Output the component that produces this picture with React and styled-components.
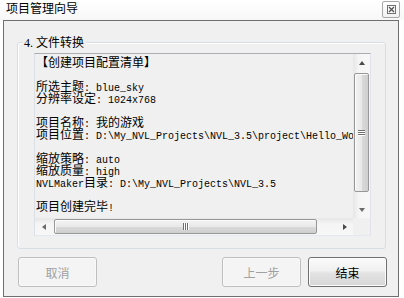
import React from 'react'
import styled, { createGlobalStyle } from 'styled-components'

const GlobalStyle = createGlobalStyle`
  body { margin: 0; background: #fff; }
`

const lines = [
  '【创建项目配置清单】',
  '',
  '所选主题: blue_sky',
  '分辨率设定: 1024x768',
  '',
  '项目名称: 我的游戏',
  '项目位置: D:\\My_NVL_Projects\\NVL_3.5\\project\\Hello_World',
  '',
  '缩放策略: auto',
  '缩放质量: high',
  'NVLMaker目录: D:\\My_NVL_Projects\\NVL_3.5',
  '',
  '项目创建完毕!',
]

// split a line into ascii / cjk runs, the ascii part uses the narrow mono font
function runs(text) {
  return text.match(/[\x00-\x7f]+|[^\x00-\x7f]+/g) || []
}

function App() {
  return (
    <>
      <GlobalStyle />
      <Window>
        <TitleBar>
          <Title>项目管理向导</Title>
          <CloseBtn>
            <svg width="9" height="9" viewBox="0 0 9 9">
              <rect x="0.5" y="0.5" width="8" height="8" fill="none" stroke="#707070" />
              <path d="M2 2 L7 7 M7 2 L2 7" stroke="#505050" strokeWidth="1.2" />
            </svg>
          </CloseBtn>
        </TitleBar>
        <Panel>
          <Group>
            <Legend><Num>4. </Num>文件转换</Legend>
            <TextBox>
              <Content>
                {lines.map((l, i) => (
                  <Line key={i}>
                    {runs(l).map((r, j) =>
                      /^[\x00-\x7f]+$/.test(r) ? <Latin key={j}>{r}</Latin> : <span key={j}>{r}</span>
                    )}
                  </Line>
                ))}
              </Content>
              <VScroll>
                <ArrowBox vertical><Arrow dir="up" /></ArrowBox>
                <VTrack>
                  <Thumb vertical>
                    <Grip vertical><i /><i /><i /></Grip>
                  </Thumb>
                </VTrack>
                <ArrowBox vertical><Arrow dir="down" /></ArrowBox>
              </VScroll>
              <HScroll>
                <ArrowBox><Arrow dir="left" /></ArrowBox>
                <HTrack>
                  <Thumb>
                    <Grip><i /><i /><i /></Grip>
                  </Thumb>
                </HTrack>
                <ArrowBox><Arrow dir="right" /></ArrowBox>
              </HScroll>
              <Corner />
            </TextBox>
          </Group>
          <ButtonRow>
            <Button disabled>取消</Button>
            <Spacer />
            <Button disabled>上一步</Button>
            <Button>结束</Button>
          </ButtonRow>
        </Panel>
      </Window>
    </>
  )
}

const Window = styled.div`
  width: 404px;
  height: 298px;
  display: flex;
  flex-direction: column;
  background: #fff;
  font-family: "Noto Sans CJK SC", "Liberation Sans", sans-serif;
  font-size: 12px;
  color: #000;
  overflow: hidden;
`

const TitleBar = styled.div`
  height: 20px;
  box-sizing: border-box;
  display: flex;
  justify-content: space-between;
  align-items: flex-start;
  padding: 1px 4px 0 6px;
  background: linear-gradient(#ffffff, #f7f7f7);
`

const Title = styled.div`
  line-height: 13px;
  font-size: 12px;
`

const CloseBtn = styled.div`
  width: 18px;
  height: 17px;
  box-sizing: border-box;
  border: 1px solid #a9a9a9;
  border-radius: 2px;
  background: linear-gradient(#ffffff, #f1f1f1);
  display: flex;
  align-items: center;
  justify-content: center;
`

const Panel = styled.div`
  flex: 1;
  min-height: 0;
  margin: 0 5px 1px 3px;
  border: 1px solid #6f6f6f;
  background: #f0f0f0;
  display: flex;
  flex-direction: column;
`

const Group = styled.div`
  position: relative;
  margin: 21px 12px 0 13px;
  padding: 10px 14px 12px 16px;
  border: 1px solid #d5dfe5;
  border-radius: 3px;
  box-shadow: inset 1px 1px 0 #fff;
`

const Legend = styled.div`
  position: absolute;
  top: -8px;
  left: 4px;
  padding: 0 2px;
  line-height: 14px;
  background: #f0f0f0;
  white-space: nowrap;
`

const Num = styled.span`
  font-family: "Liberation Serif", serif;
  font-size: 12px;
`

const TextBox = styled.div`
  height: 183px;
  box-sizing: border-box;
  display: grid;
  grid-template-columns: minmax(0, 1fr) 17px;
  grid-template-rows: minmax(0, 1fr) 17px;
  border: 1px solid;
  border-color: #abadb3 #e2e3ea #e3e9ef #dbdfe6;
  background: #f0f0f0;
`

const Content = styled.div`
  overflow: hidden;
  padding: 2px 0 0 1px;
`

const Line = styled.div`
  height: 12px;
  line-height: 12px;
  white-space: pre;
  font-size: 12px;
`

const Latin = styled.span`
  font-family: "Liberation Mono", monospace;
  font-size: 10px;
`

const VScroll = styled.div`
  display: flex;
  flex-direction: column;
  background: linear-gradient(to right, #e6e6e6, #f5f5f5 35%, #f7f7f7);
`

const HScroll = styled.div`
  display: flex;
  background: linear-gradient(#e6e6e6, #f5f5f5 35%, #f7f7f7);
`

const Corner = styled.div`
  background: #f0f0f0;
`

const ArrowBox = styled.div`
  flex: none;
  width: 17px;
  height: 17px;
  display: flex;
  align-items: center;
  justify-content: center;
`

const arrowBorders = {
  up: 'border-width: 0 3.5px 4px; border-color: transparent transparent #4a4a4a;',
  down: 'border-width: 4px 3.5px 0; border-color: #6a6a6a transparent transparent;',
  left: 'border-width: 3.5px 4px 3.5px 0; border-color: transparent #6a6a6a transparent transparent;',
  right: 'border-width: 3.5px 0 3.5px 4px; border-color: transparent transparent transparent #4a4a4a;',
}

const Arrow = styled.div`
  width: 0;
  height: 0;
  border-style: solid;
  ${p => arrowBorders[p.dir]}
`

const VTrack = styled.div`
  flex: 1;
  display: flex;
  flex-direction: column;
  padding: 2px 1px 9px 1px;
`

const HTrack = styled.div`
  flex: 1;
  display: flex;
  padding: 1px 19px 1px 2px;
`

const Thumb = styled.div`
  flex: 1;
  box-sizing: border-box;
  border: 1px solid #979797;
  border-radius: 2px;
  display: flex;
  align-items: center;
  justify-content: center;
  box-shadow: inset 1px 1px 0 #fbfbfb;
  background: ${p => p.vertical
    ? 'linear-gradient(to right, #f3f3f3, #e9e9e9 50%, #dadada 51%, #cfcfcf)'
    : 'linear-gradient(#f3f3f3, #e9e9e9 50%, #dadada 51%, #cfcfcf)'};
`

const Grip = styled.div`
  display: flex;
  flex-direction: ${p => p.vertical ? 'column' : 'row'};
  gap: 1px;
  i {
    display: block;
    width: ${p => p.vertical ? '7px' : '1px'};
    height: ${p => p.vertical ? '1px' : '7px'};
    background: #6f6f6f;
    box-shadow: ${p => p.vertical ? '0 1px 0 #fff' : '1px 0 0 #fff'};
  }
`

const ButtonRow = styled.div`
  display: flex;
  gap: 7px;
  margin-top: 8px;
  padding: 0 11px 0 14px;
`

const Spacer = styled.div`
  flex: 1;
`

const Button = styled.button`
  width: 79px;
  height: 30px;
  box-sizing: border-box;
  padding: 0;
  border: 1px solid ${p => p.disabled ? '#bdbfc1' : '#707070'};
  border-radius: 3px;
  font-family: "Noto Sans CJK SC", sans-serif;
  font-size: 12px;
  color: ${p => p.disabled ? '#a0a0a0' : '#000'};
  background: ${p => p.disabled
    ? '#f4f4f4'
    : 'linear-gradient(#fbfbfb, #f0f0f0 45%, #e2e2e2 55%, #d7d7d7)'};
  box-shadow: inset 0 0 0 1px ${p => p.disabled ? '#f8f8f8' : '#fcfcfc'};
`

export default App
